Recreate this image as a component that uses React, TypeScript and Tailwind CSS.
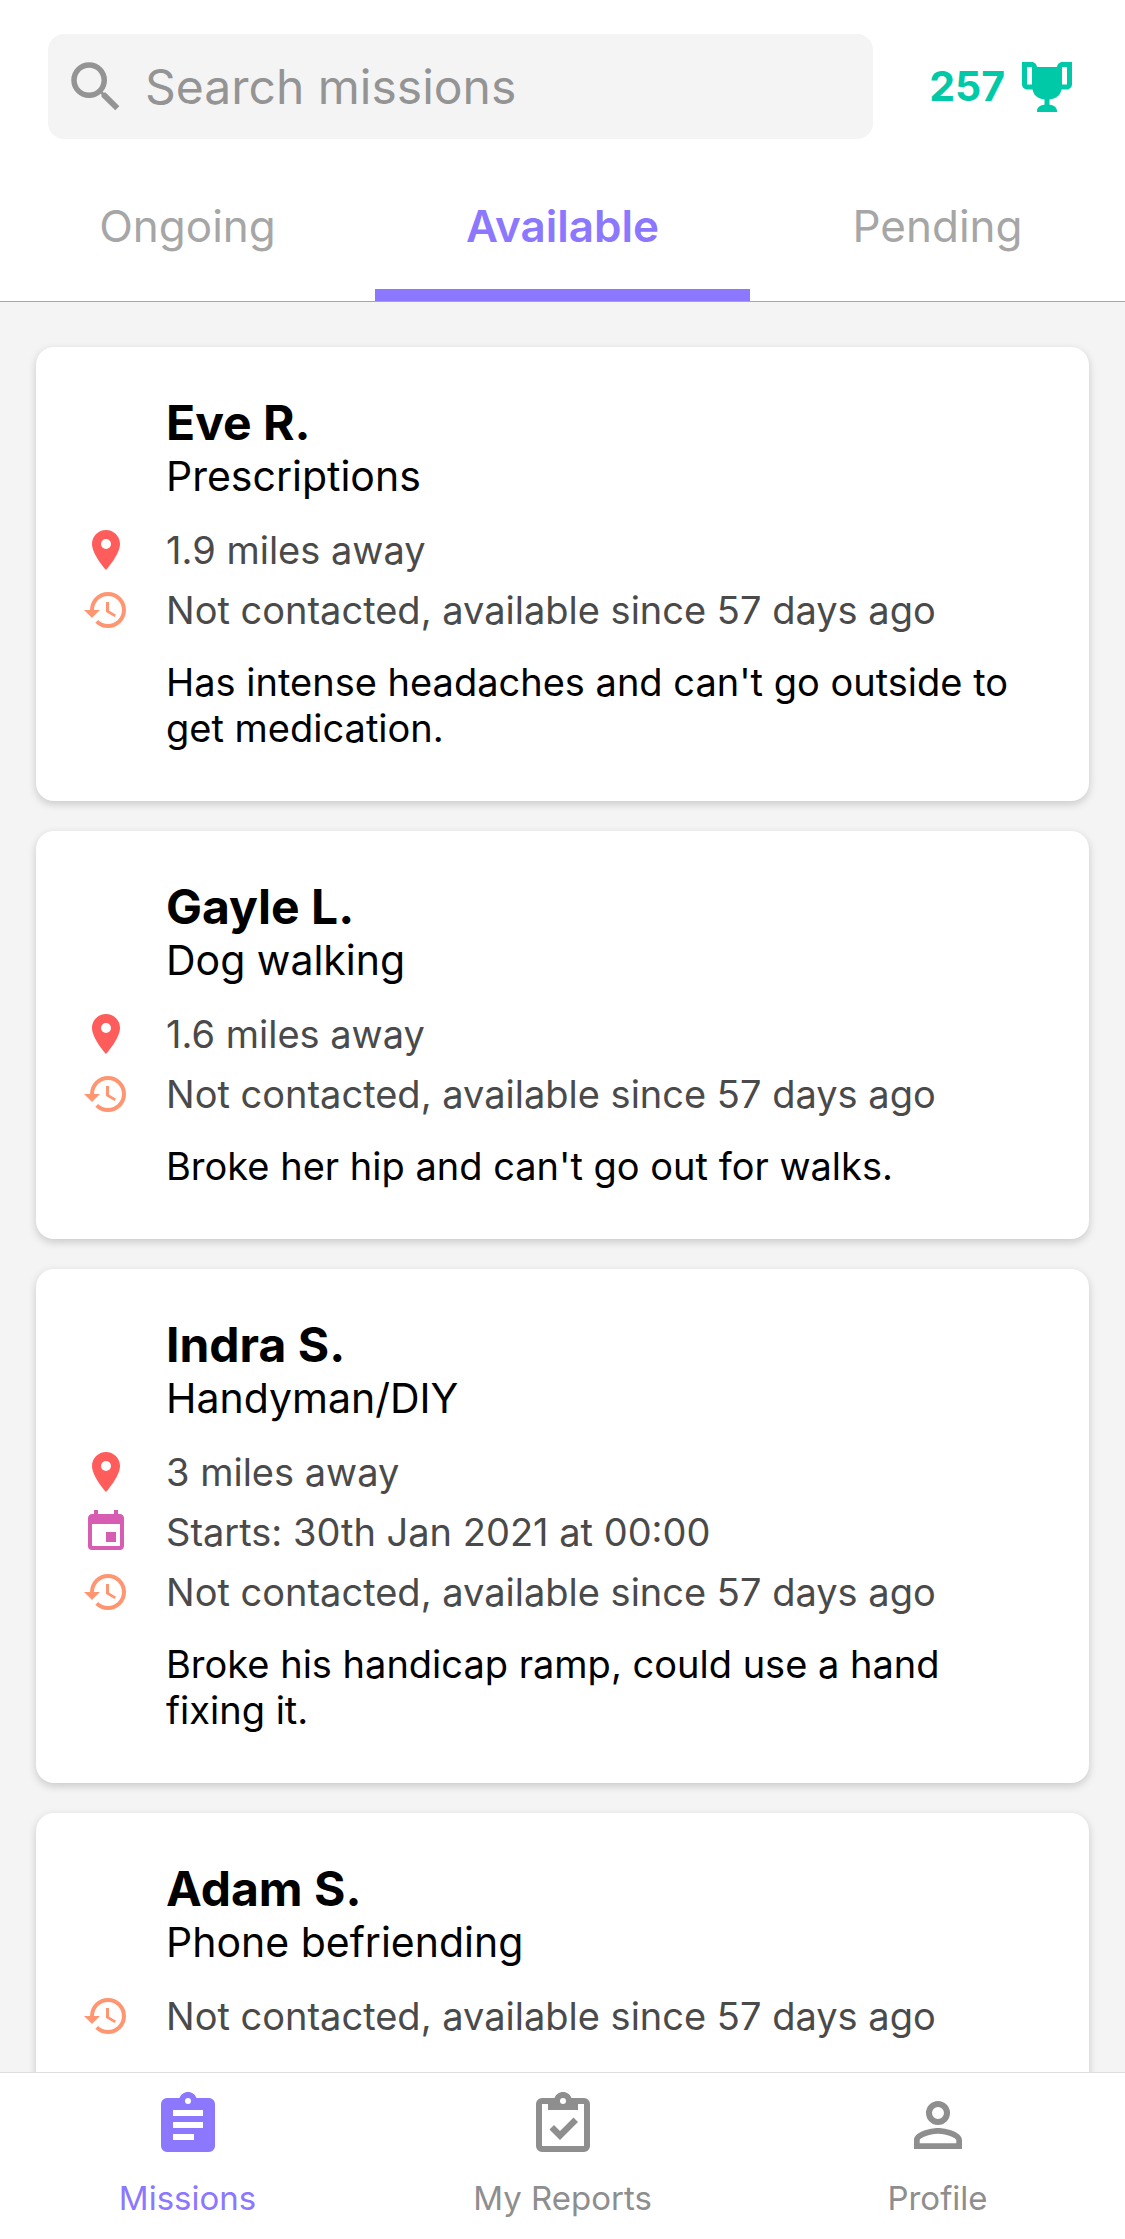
import { useState } from "react";
import type { IconType } from "react-icons";
import { MdEvent, MdHistory, MdPlace, MdSearch } from "react-icons/md";

type Mission = {
  id: number;
  name: string;
  category: string;
  distance?: string;
  starts?: string;
  status: string;
  description?: string;
};

const missions: Mission[] = [
  {
    id: 1,
    name: "Eve R.",
    category: "Prescriptions",
    distance: "1.9 miles away",
    status: "Not contacted, available since 57 days ago",
    description: "Has intense headaches and can't go outside to get medication.",
  },
  {
    id: 2,
    name: "Gayle L.",
    category: "Dog walking",
    distance: "1.6 miles away",
    status: "Not contacted, available since 57 days ago",
    description: "Broke her hip and can't go out for walks.",
  },
  {
    id: 3,
    name: "Indra S.",
    category: "Handyman/DIY",
    distance: "3 miles away",
    starts: "Starts: 30th Jan 2021 at 00:00",
    status: "Not contacted, available since 57 days ago",
    description: "Broke his handicap ramp, could use a hand fixing it.",
  },
  {
    id: 4,
    name: "Adam S.",
    category: "Phone befriending",
    status: "Not contacted, available since 57 days ago",
  },
];

const tabs = ["Ongoing", "Available", "Pending"];

// Community icon set paths, 24x24 grid
const icons = {
  trophy:
    "M20.2 2H19.5H18C17.1 2 16 3 16 4H8C8 3 6.9 2 6 2H4.5H3.8H2V11C2 12 3 13 4 13H6.2C6.6 15 7.9 16.7 11 17V19.1C8.8 19.3 8 20.4 8 21.7V22H16V21.7C16 20.4 15.2 19.3 13 19.1V17C16.1 16.7 17.4 15 17.8 13H20C21 13 22 12 22 11V2H20.2M4 11V4H6V11H4M20 11H18V4H20V11Z",
  clipboardText:
    "M17 9H7V7H17M17 13H7V11H17M14 17H7V15H14M12 3A1 1 0 0 1 13 4A1 1 0 0 1 12 5A1 1 0 0 1 11 4A1 1 0 0 1 12 3M19 3H14.82C14.4 1.84 13.3 1 12 1C10.7 1 9.6 1.84 9.18 3H5A2 2 0 0 0 3 5V19A2 2 0 0 0 5 21H19A2 2 0 0 0 21 19V5A2 2 0 0 0 19 3Z",
  clipboardCheck:
    "M19 3H14.82C14.4 1.84 13.3 1 12 1C10.7 1 9.6 1.84 9.18 3H5A2 2 0 0 0 3 5V19A2 2 0 0 0 5 21H19A2 2 0 0 0 21 19V5A2 2 0 0 0 19 3M12 3A1 1 0 0 1 13 4A1 1 0 0 1 12 5A1 1 0 0 1 11 4A1 1 0 0 1 12 3M7 7H17V5H19V19H5V5H7V7M7.5 13.5L9 12L11 14L15.5 9.5L17 11L11 17L7.5 13.5Z",
  account:
    "M12 4A4 4 0 0 1 16 8A4 4 0 0 1 12 12A4 4 0 0 1 8 8A4 4 0 0 1 12 4M12 6A2 2 0 0 0 10 8A2 2 0 0 0 12 10A2 2 0 0 0 14 8A2 2 0 0 0 12 6M12 13C14.67 13 20 14.33 20 17V20H4V17C4 14.33 9.33 13 12 13M12 14.9C9.03 14.9 5.9 16.36 5.9 17V18.1H18.1V17C18.1 16.36 14.97 14.9 12 14.9Z",
};

export default function App() {
  const [activeTab, setActiveTab] = useState("Available");

  return (
    <div className="flex h-screen flex-col bg-[#f4f4f4] font-['Inter',sans-serif] text-black">
      <header className="shrink-0 border-b border-[#a7a7a7] bg-white">
        <div className="flex items-center gap-14 px-12 pt-[34px] pb-6">
          <label className="flex h-[105px] min-w-0 flex-1 items-center gap-4 rounded-2xl bg-[#f4f4f4] pl-[15px] text-[#949494]">
            <MdSearch className="size-[66px] shrink-0" aria-hidden="true" />
            <input
              type="search"
              aria-label="Search missions"
              placeholder="Search missions"
              className="w-full min-w-0 bg-transparent text-[48px] leading-[60px] outline-none placeholder:text-[#949494]"
            />
          </label>
          <div className="flex items-center gap-3 text-[41px] font-bold text-[#00c9a7]">
            257
            <Icon path={icons.trophy} className="size-[60px]" />
          </div>
        </div>

        <div className="grid grid-cols-3" role="tablist">
          {tabs.map((tab) => (
            <button
              key={tab}
              type="button"
              role="tab"
              aria-selected={tab === activeTab}
              onClick={() => setActiveTab(tab)}
              className={`h-[138px] border-b-12 text-[44px] ${
                tab === activeTab
                  ? "border-[#8c77ff] font-semibold text-[#8c77ff]"
                  : "border-transparent text-[#a6a6a6]"
              }`}
            >
              {tab}
            </button>
          ))}
        </div>
      </header>

      <main className="flex min-h-0 flex-1 flex-col gap-[30px] overflow-hidden px-9 pt-[45px]">
        {missions.map((mission) => (
          <MissionCard key={mission.id} mission={mission} />
        ))}
      </main>

      <nav className="grid shrink-0 grid-cols-3 border-t border-[#dedede] bg-white pt-4 pb-5">
        <NavItem path={icons.clipboardText} label="Missions" active />
        <NavItem path={icons.clipboardCheck} label="My Reports" />
        <NavItem path={icons.account} label="Profile" />
      </nav>
    </div>
  );
}

function MissionCard({ mission }: { mission: Mission }) {
  return (
    <article className="shrink-0 rounded-[18px] bg-white px-[46px] pt-12 pb-[50px] shadow-[0_3px_9px_rgba(0,0,0,0.18)]">
      <div className="pl-[84px]">
        <h2 className="text-[48px] leading-[55px] font-bold">{mission.name}</h2>
        <p className="text-[41px] leading-[52px]">{mission.category}</p>
      </div>
      <ul className="mt-[18px]">
        {mission.distance ? <Detail icon={MdPlace} color="text-[#ff5c5c]" text={mission.distance} /> : null}
        {mission.starts ? <Detail icon={MdEvent} color="text-[#d65db1]" text={mission.starts} /> : null}
        <Detail icon={MdHistory} color="text-[#ff9671]" text={mission.status} />
      </ul>
      <p className="mt-[19px] pl-[84px] text-[38px] leading-[46px]">{mission.description}</p>
    </article>
  );
}

function Detail({ icon: DetailIcon, color, text }: { icon: IconType; color: string; text: string }) {
  return (
    <li className="flex h-[60px] items-center gap-9">
      <DetailIcon className={`size-12 shrink-0 ${color}`} aria-hidden="true" />
      <span className="text-[38px] whitespace-nowrap text-[#4a4a4a]">{text}</span>
    </li>
  );
}

function NavItem({ path, label, active = false }: { path: string; label: string; active?: boolean }) {
  return (
    <a href="#" className={`flex flex-col items-center gap-4 ${active ? "text-[#8c77ff]" : "text-[#8e8e8e]"}`}>
      <Icon path={path} className="size-[72px]" />
      <span className="text-[33px] leading-[42px]">{label}</span>
    </a>
  );
}

function Icon({ path, className }: { path: string; className: string }) {
  return (
    <svg viewBox="0 0 24 24" fill="currentColor" className={className} aria-hidden="true">
      <path fillRule="evenodd" d={path} />
    </svg>
  );
}
